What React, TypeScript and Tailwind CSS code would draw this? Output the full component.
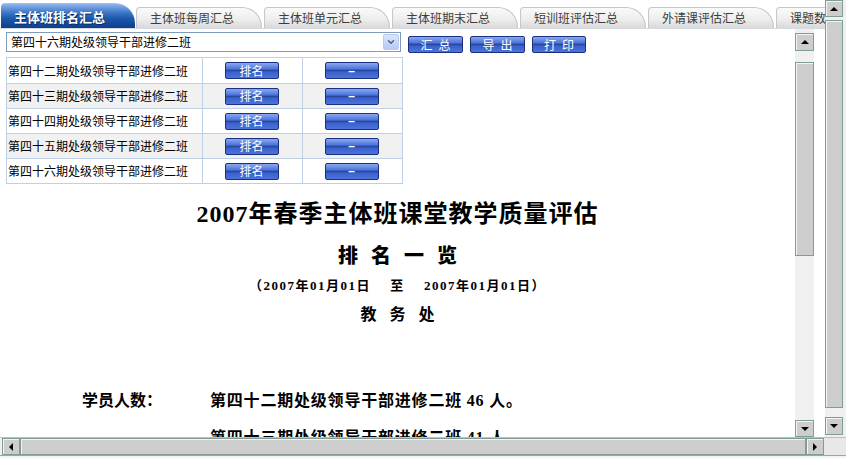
import React from 'react';
import { ChevronDown } from 'lucide-react';

const tabs = ['主体班每周汇总', '主体班单元汇总', '主体班期末汇总', '短训班评估汇总', '外请课评估汇总', '课题数据汇总'];
const classes = ['第四十二期处级领导干部进修二班', '第四十三期处级领导干部进修二班', '第四十四期处级领导干部进修二班', '第四十五期处级领导干部进修二班', '第四十六期处级领导干部进修二班'];

function BlueBtn({ children, className = '' }: { children: React.ReactNode; className?: string }) {
  return (
    <div
      className={`flex items-center justify-center h-[17px] border border-[#1b2f80] rounded-[2px] text-white text-[12px] leading-none bg-[linear-gradient(to_bottom,#8aa8f0_0%,#4f77dc_38%,#28479f_50%,#3a60cc_60%,#4c74dc_100%)] ${className}`}
    >
      {children}
    </div>
  );
}

function Arrow({ dir }: { dir: 'up' | 'down' | 'left' | 'right' }) {
  if (dir === 'up') return <div className="w-0 h-0 border-x-[4px] border-x-transparent border-b-[4px] border-b-black" />;
  if (dir === 'down') return <div className="w-0 h-0 border-x-[4px] border-x-transparent border-t-[4px] border-t-black" />;
  if (dir === 'left') return <div className="w-0 h-0 border-y-[4px] border-y-transparent border-r-[4px] border-r-black" />;
  return <div className="w-0 h-0 border-y-[4px] border-y-transparent border-l-[4px] border-l-black" />;
}

function SbBtn({ dir, className = '' }: { dir: 'up' | 'down' | 'left' | 'right'; className?: string }) {
  return (
    <div className={`flex items-center justify-center bg-[#cdcdcd] border border-[#7f9c96] shadow-[inset_1px_1px_0_#f4f4f4] shrink-0 ${className}`}>
      <Arrow dir={dir} />
    </div>
  );
}

export default function App() {
  return (
    <div className="w-[846px] h-[458px] bg-white overflow-hidden flex flex-col font-['Noto_Sans_CJK_SC',sans-serif] text-black">
      <div className="flex h-[437px]">
        <div className="w-[825px] flex flex-col min-w-0">
          {/* Tabs */}
          <div className="h-[29px] flex items-end border-b border-[#d6dbe3] overflow-hidden shrink-0">
            <div className="w-[134px] h-[25px] shrink-0 ml-[1px] rounded-tl-[4px] rounded-tr-[20px] border-t border-[#9cc0f0] bg-[linear-gradient(to_bottom,#8fb4ec_0%,#3f78c8_35%,#1d58ac_60%,#0e3f8e_100%)] flex items-center pl-[13px]">
              <span className="text-white font-bold text-[13px] leading-none whitespace-nowrap [text-shadow:1px_1px_0_#0a2a60]">主体班排名汇总</span>
            </div>
            <div className="flex items-end ml-[1px] shrink-0">
              {tabs.map((t) => (
                <div
                  key={t}
                  className="w-[126px] mr-[2px] h-[21px] shrink-0 rounded-tl-[4px] rounded-tr-[20px] border-t border-r border-l border-[#c6c6c6] bg-[linear-gradient(to_bottom,#fafafa_0%,#eeeeee_55%,#d9d9d9_100%)] flex items-center pl-[13px]"
                >
                  <span className="text-[12px] leading-none text-[#3c3c3c] whitespace-nowrap">{t}</span>
                </div>
              ))}
            </div>
          </div>

          <div className="flex flex-1 min-h-0">
            {/* Content */}
            <div className="w-[795px] shrink-0 overflow-hidden flex flex-col">
              <div className="flex items-start mt-[3px]">
                <div className="ml-[6px] w-[395px] h-[20px] border border-[#7f9db9] flex items-center justify-between pl-[4px] pr-[1px]">
                  <span className="text-[12px] leading-none">第四十六期处级领导干部进修二班</span>
                  <div className="w-[16px] h-[16px] bg-[linear-gradient(to_bottom,#dbe6fd,#b7c9f5)] border border-[#b9c9ef] rounded-[2px] flex items-center justify-center">
                    <ChevronDown className="w-[10px] h-[10px] text-[#4d6185]" strokeWidth={3.5} />
                  </div>
                </div>
                <div className="flex gap-[7px] ml-[7px] mt-[4px]">
                  <BlueBtn className="w-[55px] tracking-[6px] pl-[6px]">汇总</BlueBtn>
                  <BlueBtn className="w-[55px] tracking-[6px] pl-[6px]">导出</BlueBtn>
                  <BlueBtn className="w-[54px] tracking-[6px] pl-[6px]">打印</BlueBtn>
                </div>
              </div>

              <div className="ml-[6px] mt-[4px] w-[397px] border border-[#bdd0e6]">
                {classes.map((c, i) => (
                  <div
                    key={c}
                    className={`flex h-[25px] ${i > 0 ? 'border-t border-[#bdd0e6]' : ''} ${i % 2 === 1 ? 'bg-[#f1f1f1]' : 'bg-white'}`}
                  >
                    <div className="w-[196px] border-r border-[#bdd0e6] flex items-center pl-[1px] text-[12px] leading-none">{c}</div>
                    <div className="w-[100px] border-r border-[#bdd0e6] flex items-center justify-center">
                      <BlueBtn className="w-[54px] ml-[-2px]">排名</BlueBtn>
                    </div>
                    <div className="flex-1 flex items-center justify-center">
                      <BlueBtn className="w-[54px] ml-[-2px] font-['Liberation_Sans',sans-serif] font-bold">–</BlueBtn>
                    </div>
                  </div>
                ))}
              </div>

              <div className="mt-[16px] h-[28px] leading-[28px] text-center text-[24px] font-bold tracking-[1px] font-['Liberation_Serif','Noto_Sans_CJK_SC',serif]">
                2007年春季主体班课堂教学质量评估
              </div>
              <div className="mt-[15px] h-[24px] flex justify-center gap-[13px] text-[20px] leading-[24px] font-black">
                <span>排</span>
                <span>名</span>
                <span>一</span>
                <span>览</span>
              </div>
              <div className="mt-[9px] h-[20px] leading-[20px] text-center text-[13px] font-bold tracking-[1.5px] font-['Liberation_Serif','Noto_Sans_CJK_SC',serif] whitespace-pre">
                （2007年01月01日　 至　 2007年01月01日）
              </div>
              <div className="mt-[7px] h-[20px] flex justify-center gap-[13px] text-[16px] leading-[20px] font-bold">
                <span>教</span>
                <span>务</span>
                <span>处</span>
              </div>

              <div className="mt-[68px] pl-[82px] grid grid-cols-[128px_1fr] gap-y-[17px] text-[16px] leading-[20px] font-bold font-['Liberation_Serif','Noto_Sans_CJK_SC',serif]">
                <div>学员人数：</div>
                <div className="tracking-[0.8px] whitespace-pre">第四十二期处级领导干部进修二班 46 人。</div>
                <div />
                <div className="tracking-[0.8px] whitespace-pre">第四十三期处级领导干部进修二班 41 人。</div>
              </div>
            </div>

            {/* Inner scrollbar */}
            <div className="w-[19px] shrink-0 pt-[4px] flex flex-col bg-[#f0f0f0]">
              <SbBtn dir="up" className="h-[18px]" />
              <div className="h-[11px]" />
              <div className="h-[194px] bg-[#cdcdcd] border border-[#7f9c96] shadow-[inset_1px_1px_0_#f4f4f4]" />
              <div className="flex-1" />
              <SbBtn dir="down" className="h-[17px]" />
            </div>
            <div className="w-[11px] shrink-0" />
          </div>
        </div>

        {/* Outer vertical scrollbar */}
        <div className="w-[21px] flex flex-col bg-[#f0f0f0] pr-[3px]">
          <SbBtn dir="up" className="h-[17px]" />
          <div className="h-[3px]" />
          <div className="h-[388px] bg-[#cdcdcd] border border-[#7f9c96] shadow-[inset_1px_1px_0_#f4f4f4]" />
          <div className="flex-1" />
          <SbBtn dir="down" className="h-[18px] mb-[2px]" />
        </div>
      </div>

      {/* Horizontal scrollbar */}
      <div className="h-[18px] flex bg-[#f0f0f0] border-t border-[#b4c4c0]">
        <SbBtn dir="left" className="w-[18px] ml-[2px]" />
        <div className="w-[786px] bg-[#cdcdcd] border border-[#7f9c96] shadow-[inset_1px_1px_0_#f4f4f4]" />
        <SbBtn dir="right" className="w-[18px]" />
        <div className="flex-1 bg-[#e8e8e8]" />
      </div>
      <div className="flex-1 bg-[#f4f4f4] border-t border-[#9aa9a6]" />
    </div>
  );
}
